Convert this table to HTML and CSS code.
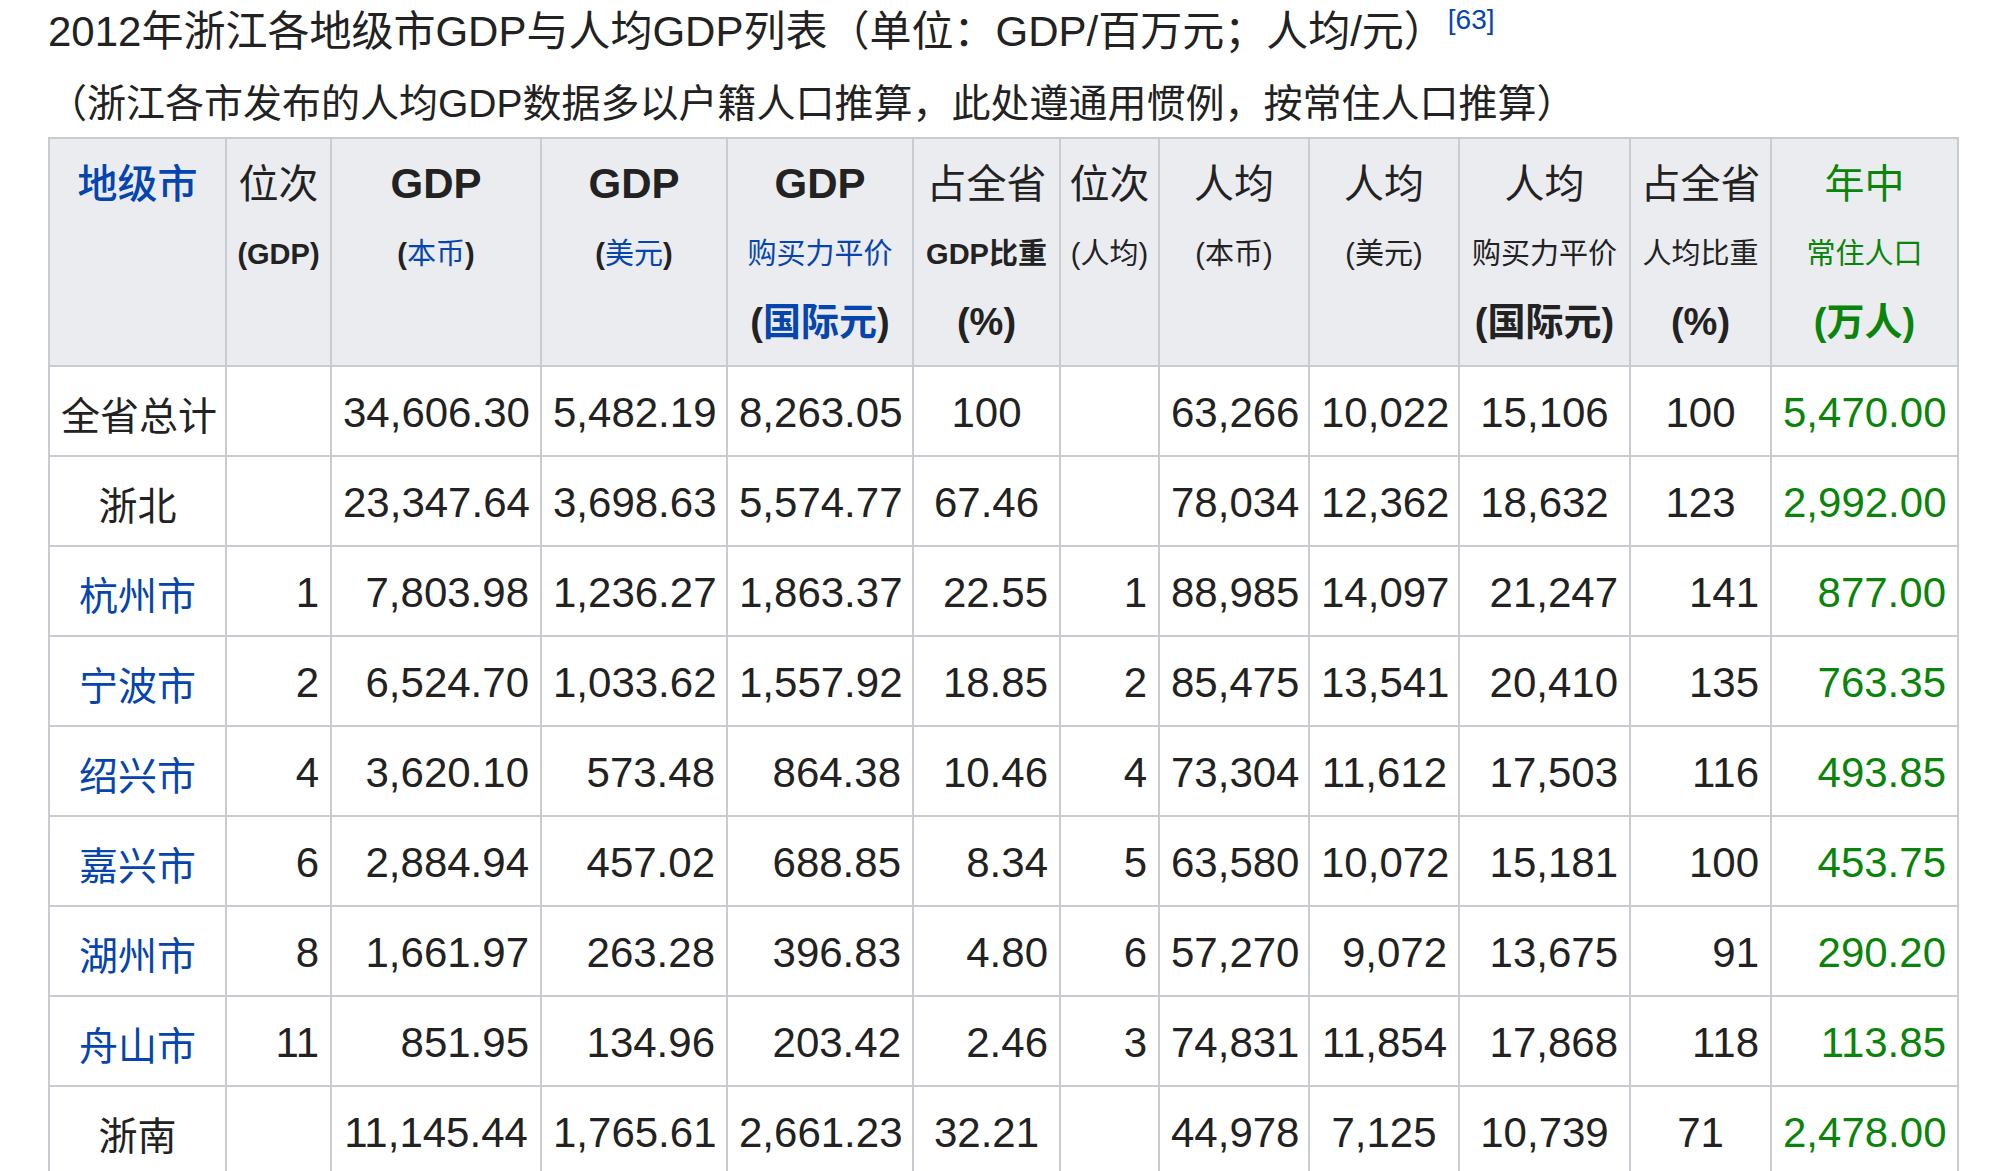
FILE: index.html
```html
<!DOCTYPE html>
<html lang="zh-CN">
<head>
<meta charset="utf-8">
<title>2012年浙江各地级市GDP</title>
<link rel="stylesheet" href="styles.css">
</head>
<body>
<div class="page">
  <div class="title">2012年浙江各地级市GDP与人均GDP列表（单位：GDP/百万元；人均/元）<a class="ref">[63]</a></div>
  <div class="subtitle">（浙江各市发布的人均GDP数据多以户籍人口推算，此处遵通用惯例，按常住人口推算）</div>
  <table class="t">
    <colgroup>
      <col class="c1"><col class="c2"><col class="c3"><col class="c4"><col class="c5"><col class="c6">
      <col class="c7"><col class="c8"><col class="c9"><col class="c10"><col class="c11"><col class="c12">
    </colgroup>
    <thead>
      <tr>
        <th><span class="l1 link cjkm">地级市</span></th>
        <th><span class="l1">位次</span><span class="l2 b">(GDP)</span></th>
        <th><span class="l1 b lat">GDP</span><span class="l2"><b>(</b><span class="link">本币</span><b>)</b></span></th>
        <th><span class="l1 b lat">GDP</span><span class="l2"><b>(</b><span class="link">美元</span><b>)</b></span></th>
        <th><span class="l1 b lat">GDP</span><span class="l2 link">购买力平价</span><span class="l3">(<span class="link">国际元</span>)</span></th>
        <th><span class="l1">占全省</span><span class="l2"><b>GDP比重</b></span><span class="l3">(%)</span></th>
        <th><span class="l1">位次</span><span class="l2">(人均)</span></th>
        <th><span class="l1">人均</span><span class="l2">(本币)</span></th>
        <th><span class="l1">人均</span><span class="l2">(美元)</span></th>
        <th><span class="l1">人均</span><span class="l2">购买力平价</span><span class="l3">(国际元)</span></th>
        <th><span class="l1">占全省</span><span class="l2">人均比重</span><span class="l3">(%)</span></th>
        <th class="green"><span class="l1">年中</span><span class="l2">常住人口</span><span class="l3">(万人)</span></th>
      </tr>
    </thead>
    <tbody>
      <tr class="sum">
        <td>全省总计</td><td></td><td>34,606.30</td><td>5,482.19</td><td>8,263.05</td><td>100</td><td></td><td>63,266</td><td>10,022</td><td>15,106</td><td>100</td><td class="green">5,470.00</td>
      </tr>
      <tr class="sum">
        <td>浙北</td><td></td><td>23,347.64</td><td>3,698.63</td><td>5,574.77</td><td>67.46</td><td></td><td>78,034</td><td>12,362</td><td>18,632</td><td>123</td><td class="green">2,992.00</td>
      </tr>
      <tr class="city">
        <td><a class="link">杭州市</a></td><td>1</td><td>7,803.98</td><td>1,236.27</td><td>1,863.37</td><td>22.55</td><td>1</td><td>88,985</td><td>14,097</td><td>21,247</td><td>141</td><td class="green">877.00</td>
      </tr>
      <tr class="city">
        <td><a class="link">宁波市</a></td><td>2</td><td>6,524.70</td><td>1,033.62</td><td>1,557.92</td><td>18.85</td><td>2</td><td>85,475</td><td>13,541</td><td>20,410</td><td>135</td><td class="green">763.35</td>
      </tr>
      <tr class="city">
        <td><a class="link">绍兴市</a></td><td>4</td><td>3,620.10</td><td>573.48</td><td>864.38</td><td>10.46</td><td>4</td><td>73,304</td><td>11,612</td><td>17,503</td><td>116</td><td class="green">493.85</td>
      </tr>
      <tr class="city">
        <td><a class="link">嘉兴市</a></td><td>6</td><td>2,884.94</td><td>457.02</td><td>688.85</td><td>8.34</td><td>5</td><td>63,580</td><td>10,072</td><td>15,181</td><td>100</td><td class="green">453.75</td>
      </tr>
      <tr class="city">
        <td><a class="link">湖州市</a></td><td>8</td><td>1,661.97</td><td>263.28</td><td>396.83</td><td>4.80</td><td>6</td><td>57,270</td><td>9,072</td><td>13,675</td><td>91</td><td class="green">290.20</td>
      </tr>
      <tr class="city">
        <td><a class="link">舟山市</a></td><td>11</td><td>851.95</td><td>134.96</td><td>203.42</td><td>2.46</td><td>3</td><td>74,831</td><td>11,854</td><td>17,868</td><td>118</td><td class="green">113.85</td>
      </tr>
      <tr class="sum">
        <td>浙南</td><td></td><td>11,145.44</td><td>1,765.61</td><td>2,661.23</td><td>32.21</td><td></td><td>44,978</td><td>7,125</td><td>10,739</td><td>71</td><td class="green">2,478.00</td>
      </tr>
    </tbody>
  </table>
</div>
</body>
</html>
```

FILE: styles.css
```css
html, body {
  margin: 0;
  padding: 0;
  background: #ffffff;
}

body {
  font-family: "Liberation Sans", "Noto Sans CJK SC", sans-serif;
  color: #222222;
}

.page {
  padding-left: 48px;
}

.title {
  font-size: 42px;
  height: 64px;
  line-height: 64px;
  white-space: nowrap;
}

.ref {
  font-size: 28px;
  line-height: 40px;
  vertical-align: top;
  color: #0645ad;
  margin-left: 2px;
}

.subtitle {
  font-size: 39px;
  margin-top: 8px;
  height: 64px;
  line-height: 64px;
  white-space: nowrap;
}

.t {
  border-collapse: collapse;
  table-layout: fixed;
  width: 1911px;
  margin-top: 1px;
}

.c1 { width: 177px; }
.c2 { width: 105px; }
.c3 { width: 210px; }
.c4 { width: 186px; }
.c5 { width: 186px; }
.c6 { width: 147px; }
.c7 { width: 99px; }
.c8 { width: 150px; }
.c9 { width: 150px; }
.c10 { width: 171px; }
.c11 { width: 141px; }
.c12 { width: 187px; }

.t th,
.t td {
  border: 2px solid #c8ccd1;
}

.t th {
  background: #eaecf0;
  vertical-align: top;
  padding: 8px 0;
  text-align: center;
  font-weight: normal;
  white-space: nowrap;
}

.l1 {
  display: block;
  height: 74px;
  line-height: 74px;
  font-size: 40px;
}

.l1.lat {
  font-size: 42px;
}

.l2 {
  display: block;
  height: 66px;
  line-height: 66px;
  font-size: 29px;
}

.l3 {
  display: block;
  height: 70px;
  line-height: 70px;
  font-size: 38px;
  font-weight: bold;
}

.b {
  font-weight: bold;
}

.cjkm {
  font-weight: 500;
}

.link {
  color: #0645ad;
}

.green {
  color: #0a840a;
}

.t td {
  height: 84px;
  padding: 4px 11px 0;
  font-size: 42px;
  vertical-align: middle;
  white-space: nowrap;
}

.t td:first-child {
  font-size: 39px;
}

.sum td {
  text-align: center;
}

.city td {
  text-align: right;
}

.city td:first-child {
  text-align: center;
}
```
